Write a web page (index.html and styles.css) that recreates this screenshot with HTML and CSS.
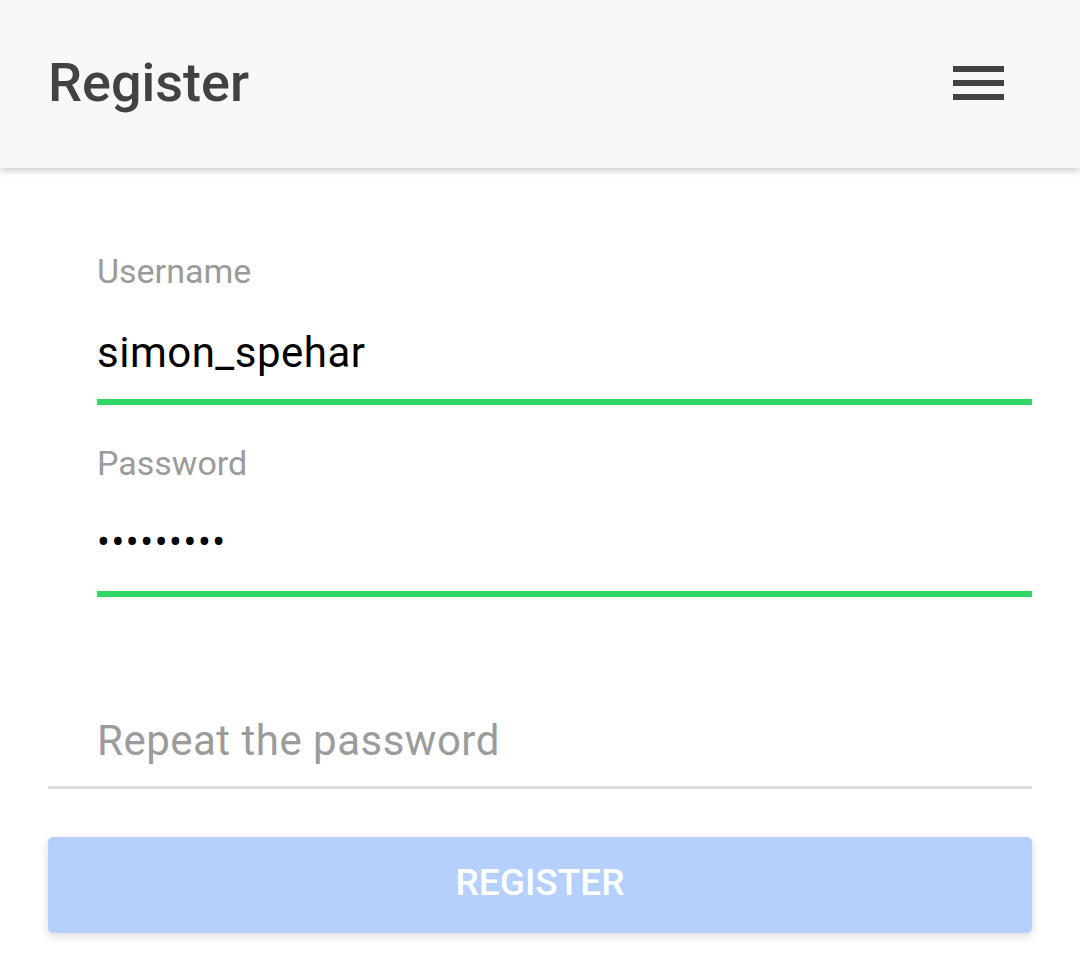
FILE: index.html
```html
<!DOCTYPE html>
<html lang="en">
<head>
<meta charset="utf-8">
<title>Register</title>
<link rel="stylesheet" href="styles.css">
</head>
<body>
<header class="appbar">
  <h1 class="appbar-title">Register</h1>
  <button class="menu-btn" aria-label="Menu">
    <span class="bar"></span><span class="bar"></span><span class="bar"></span>
  </button>
</header>
<main class="form">
  <div class="field field-filled">
    <label class="field-label" for="username">Username</label>
    <input class="field-input" id="username" type="text" value="simon_spehar" readonly>
  </div>
  <div class="field field-filled field-password">
    <label class="field-label" for="password">Password</label>
    <div class="field-input dots" id="password">•••••••••</div>
  </div>
  <div class="field field-empty">
    <input class="field-input" type="password" placeholder="Repeat the password">
  </div>
  <button class="submit-btn">REGISTER</button>
</main>
</body>
</html>
```

FILE: styles.css
```css
* { box-sizing: border-box; }
html, body { margin: 0; padding: 0; background: #ffffff; }
body { font-family: Roboto, "Noto Sans", "Liberation Sans", sans-serif; width: 1080px; height: 970px; overflow: hidden; }

.appbar {
  height: 168px;
  background: #f8f8f8;
  display: flex;
  align-items: center;
  justify-content: space-between;
  padding: 0 76px 3px 48px;
  box-shadow: 0 3px 7px rgba(0, 0, 0, 0.2);
  position: relative;
  z-index: 1;
}
.appbar-title {
  margin: 0;
  font-size: 54px;
  font-weight: 500;
  color: #424242;
  line-height: 64px;
}
.menu-btn {
  border: none;
  background: transparent;
  padding: 0;
  width: 51px;
  display: flex;
  flex-direction: column;
  gap: 8px;
  cursor: pointer;
}
.menu-btn .bar { display: block; height: 6px; width: 51px; background: #424242; }

.form { padding: 83px 48px 0 48px; }

.field { display: flex; flex-direction: column; }
.field-filled { margin-left: 49px; }
.field-password { margin-top: 38px; }

.field-label {
  font-size: 34px;
  line-height: 40px;
  height: 40px;
  color: #9b9b9b;
}
.field-input {
  font-family: inherit;
  font-size: 42px;
  letter-spacing: 0.5px;
  line-height: 48px;
  color: #000000;
  border: none;
  outline: none;
  background: transparent;
  margin: 0;
  width: 100%;
}
.field-filled .field-input { border-bottom: 6px solid #33d767; height: 114px; padding: 37px 0 23px 0; }
.field-password .field-input { padding: 35px 0 25px 0; height: 114px; }
.dots { font-size: 38px; letter-spacing: 1.6px; }

.field-empty { margin-top: 120px; border-bottom: 3px solid #dddddd; }
.field-empty .field-input { padding: 0 0 22px 49px; height: 69px; }
.field-empty .field-input::placeholder { color: #9b9b9b; opacity: 1; }

.submit-btn {
  margin-top: 48px;
  width: 100%;
  height: 96px;
  padding: 0 0 5px 0;
  border: none;
  border-radius: 5px;
  background: #b6d0fd;
  color: #ffffff;
  font-family: inherit;
  font-size: 37px;
  font-weight: 500;
  box-shadow: 0 3px 8px rgba(0, 0, 0, 0.14);
  cursor: pointer;
}
```
